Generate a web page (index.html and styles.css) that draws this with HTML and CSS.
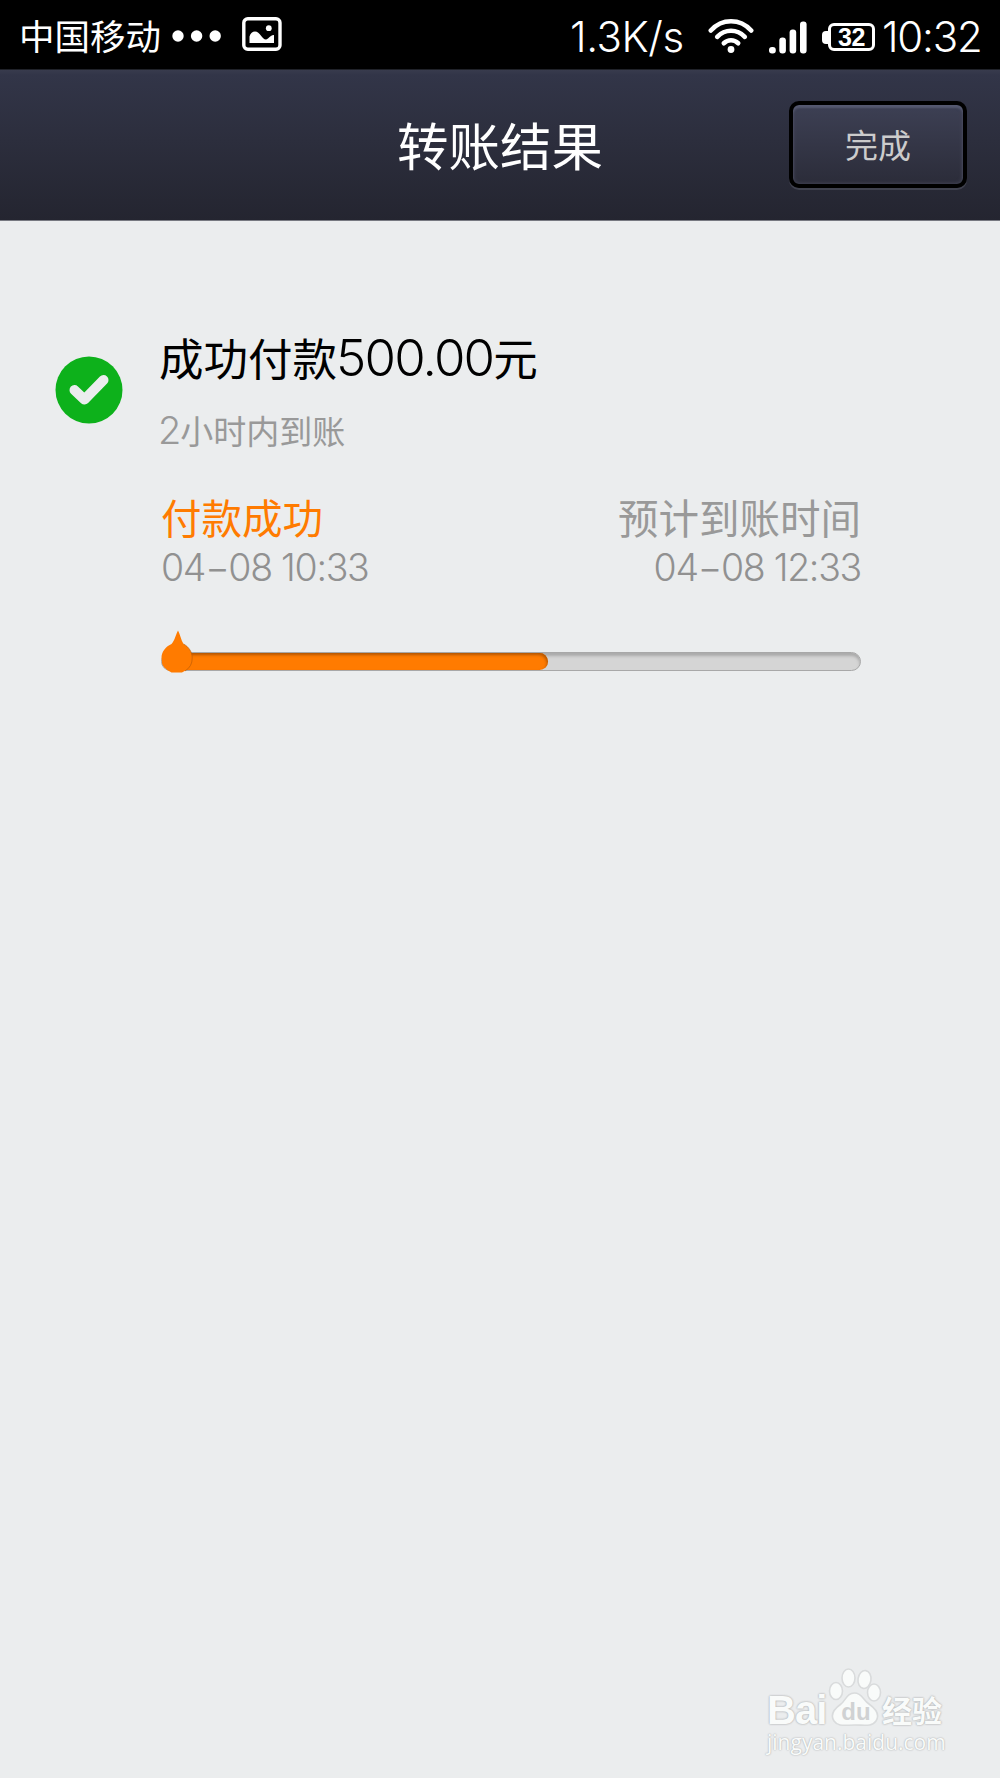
FILE: index.html
```html
<!DOCTYPE html>
<html lang="zh-CN">
<head>
<meta charset="utf-8">
<title>转账结果</title>
<link rel="stylesheet" href="styles.css">
</head>
<body>
<div class="statusbar">
  <span class="carrier">中国移动</span>
  <svg class="dots" width="50" height="12" viewBox="0 0 50 12" fill="#fff"><circle cx="6" cy="6" r="5.7"/><circle cx="24.6" cy="6" r="5.7"/><circle cx="43.2" cy="6" r="5.7"/></svg>
  <svg class="photo" width="40" height="34" viewBox="0 0 40 34"><rect x="1.8" y="1.8" width="36.2" height="30.4" rx="4" fill="none" stroke="#fff" stroke-width="3.4"/><path d="M7.5 26V19.500C8.500 16 10.500 14.500 13 14.500C18 14.500 20 22.500 24 22.500C26.500 22.500 27 18.500 32 18V26Z" fill="#fff"/><circle cx="26.800" cy="11.200" r="2.900" fill="#fff"/></svg>
  <span class="speed">1.3K/s</span>
  <svg class="wifi" width="46" height="36" viewBox="0 0 46 36" fill="none" stroke="#fff" stroke-width="4.600" stroke-linecap="round"><path d="M2.800 12.500C14 .2 32 .2 43.200 12.500"/><path d="M9.200 18.800C17 10.800 29 10.800 36.800 18.800"/><path d="M15.800 25.200C20 21.300 26 21.300 30.200 25.200"/><circle cx="23" cy="31.500" r="3.400" fill="#fff" stroke="none"/></svg>
  <svg class="signal" width="38" height="33" viewBox="0 0 38 33" fill="#fff"><rect y="26" width="6.800" height="6.500" rx="3"/><rect x="10.300" y="16.500" width="6.600" height="16" rx="3"/><rect x="20.600" y="8.500" width="6.600" height="24" rx="3"/><rect x="31" y=".5" width="6.600" height="32" rx="3"/></svg>
  <div class="battery"><span class="nub"></span><span class="cell">32</span></div>
  <span class="clock">10:32</span>
</div>
<header class="header">
  <h1 class="title">转账结果</h1>
  <button class="done">完成</button>
</header>
<main class="result">
  <svg class="check" width="68" height="68" viewBox="0 0 68 68"><circle cx="34" cy="34" r="33.500" fill="#0db11b"/><path d="M19.500 34L29.500 43.500L48.500 24" fill="none" stroke="#ebedee" stroke-width="10" stroke-linecap="round" stroke-linejoin="round"/></svg>
  <div class="details">
    <div class="amount">成功付款<span class="num">500.00</span>元</div>
    <div class="note"><span class="num">2</span>小时内到账</div>
    <div class="stages">
      <div class="stage stage-paid"><div class="label">付款成功</div><div class="time">04−08 10:33</div></div>
      <div class="stage stage-due"><div class="label">预计到账时间</div><div class="time">04−08 12:33</div></div>
    </div>
    <div class="progress">
      <div class="bar"></div>
      <svg class="drop" width="36" height="44" viewBox="0 0 36 44"><path d="M17 .5C19 4 20 10 22.500 14C28 17 31.200 22 31.200 28A15.500 15 0 0 1 21 42.500H10.500A15.500 15 0 0 1 .5 28C.5 22 4 17 10.500 14C14 10 15 4 17 .5Z" fill="#ff7b00"/><path d="M22.500 14C28 17 31.200 22 31.200 28A15.500 15 0 0 1 24 41" fill="none" stroke="#b85b08" stroke-opacity=".65"/></svg>
    </div>
  </div>
</main>
<footer class="watermark">
  <div class="brand">
    <span class="bai">Bai</span>
    <div class="paw"><svg width="56" height="60" viewBox="0 0 56 60" fill="#f9fbfa" stroke="#d9dbdc" stroke-width="1.600"><ellipse cx="8" cy="23" rx="6.500" ry="8.500"/><ellipse cx="20.500" cy="10" rx="6.500" ry="9"/><ellipse cx="36.500" cy="11.500" rx="6.500" ry="9" transform="rotate(8 36.500 11.500)"/><ellipse cx="46" cy="24.500" rx="6.500" ry="8.500"/><path d="M26.500 25C34 25 35 32 41 36C48 41 52 47 48 53C44 59 36 57 27 57C17 57 10 59 6 53C2 47 6 41 13 36C18 32 19 25 26.500 25Z"/></svg><span class="du">du</span></div>
    <span class="jingyan">经验</span>
  </div>
  <div class="site">jingyan.baidu.com</div>
</footer>
</body>
</html>
```
FILE: styles.css
```css
* { box-sizing: border-box; }
body {
  margin: 0;
  width: 1000px;
  height: 1778px;
  display: flex;
  flex-direction: column;
  background: #ebedee;
  font-family: Inter, "Noto Sans CJK SC", sans-serif;
  overflow: hidden;
}
svg { display: block; flex: none; }
.statusbar {
  height: 69px;
  flex: none;
  display: flex;
  align-items: flex-start;
  padding: 17px 0 0 19px;
  background: #000;
  color: #fff;
  white-space: nowrap;
}
.carrier { width: 153px; font: 35.5px/36px "Noto Sans CJK SC", sans-serif; }
.dots { margin-top: 13px; }
.photo { margin-left: 20px; }
.speed { margin-left: 288px; width: 138px; font-size: 42px; font-weight: 300; line-height: 39px; letter-spacing: -0.4px; }
.wifi { margin-top: 1px; }
.signal { margin: 4px 0 0 15px; }
.battery { display: flex; align-items: center; margin: 6px 0 0 15px; height: 28px; }
.nub { width: 6px; height: 13px; background: #fff; border-radius: 4px 0 0 4px; }
.cell { width: 47px; height: 28px; border: 3px solid #fff; border-radius: 6px; font: bold 25px/23px "Liberation Sans", sans-serif; letter-spacing: -0.5px; text-align: center; }
.clock { margin-left: 7px; font-size: 42px; font-weight: 300; line-height: 40px; letter-spacing: -1.2px; }
.header {
  height: 152px;
  flex: none;
  display: grid;
  grid-template-columns: 1fr auto 1fr;
  align-items: start;
  border-top: 1px solid #202229;
  background: linear-gradient(#383b4d 0, #323548 5px, #2c2e3d 70px, #242530 100%);
  border-bottom: 1px solid #777981;
}
.title { grid-column: 2; margin: 47px 0 0; font: 51.5px/54px "Noto Sans CJK SC", sans-serif; color: #fff; }
.done {
  justify-self: end;
  width: 178px;
  height: 87px;
  margin: 31px 33px 0 0;
  padding: 0 0 2px;
  border: 4px solid #000;
  border-radius: 10px;
  background: linear-gradient(#3d4054, #2b2c39);
  box-shadow: inset 0 3px 2px #555970, inset 0 0 4px #4b4d60, 0 2px 0 #40424f;
  color: #ccc;
  font: 33px/36px "Noto Sans CJK SC", sans-serif;
}
.result { display: flex; padding: 109px 139px 0 55px; }
.check { margin-top: 26px; }
.details { flex: 1; margin-left: 36px; }
.amount { height: 54px; font: 44.5px/54px "Noto Sans CJK SC", sans-serif; color: #000; white-space: nowrap; }
.amount .num { font-family: Inter, sans-serif; font-weight: 300; font-size: 51px; letter-spacing: -1.8px; margin-left: -1px; }
.note { height: 42px; margin-top: 25px; font: 33px/42px "Noto Sans CJK SC", sans-serif; color: #999; }
.note .num { font-family: Inter, sans-serif; font-weight: 300; font-size: 38px; letter-spacing: -1px; margin-left: -1px; }
.stages { display: flex; justify-content: space-between; margin: 41px 0 0 2px; color: #999; white-space: nowrap; }
.label { font: 40.5px/50px "Noto Sans CJK SC", sans-serif; }
.time { margin-top: 3px; font-size: 37.5px; font-weight: 300; line-height: 46px; letter-spacing: -1.3px; color: #919191; }
.stage-paid .label { color: #ff7b00; }
.stage-due { text-align: right; }
.progress { position: relative; height: 44px; margin: 39px 0 0 2px; padding-top: 22px; }
.bar {
  height: 19px;
  border: 1px solid #a8a8a8;
  border-radius: 10px;
  background: #d5d5d5;
  box-shadow: inset 0 3px 3px #aaa;
  overflow: hidden;
}
.bar::before {
  content: "";
  display: block;
  width: 386px;
  height: 17px;
  border-radius: 0 9px 9px 0;
  background: #ff7b00;
  box-shadow: inset -1px 2px 3px #b35600;
}
.drop { position: absolute; left: 0; top: 0; }
.watermark { margin: auto 0 20px 767px; width: 190px; color: #f9fbfa; }
.brand { display: flex; align-items: flex-end; height: 60px; }
.bai, .jingyan { text-shadow: 0 0 2px #b4b6b7, 0 0 2px #b4b6b7; }
.bai { width: 61px; font: bold 40px/36px "Liberation Sans", sans-serif; letter-spacing: -1px; }
.paw { display: grid; margin-right: -2px; }
.paw > * { grid-area: 1 / 1; }
.du { align-self: end; justify-self: center; padding-bottom: 2px; font: bold 24px/28px "Liberation Sans", sans-serif; color: #d0d2d3; }
.jingyan { font: bold 30px/37px "Noto Sans CJK SC", sans-serif; }
.site { height: 30px; font: 21px/28px "Open Sans", sans-serif; text-shadow: 0 0 2px #b4b6b7, 0 0 1px #b4b6b7; }
```
